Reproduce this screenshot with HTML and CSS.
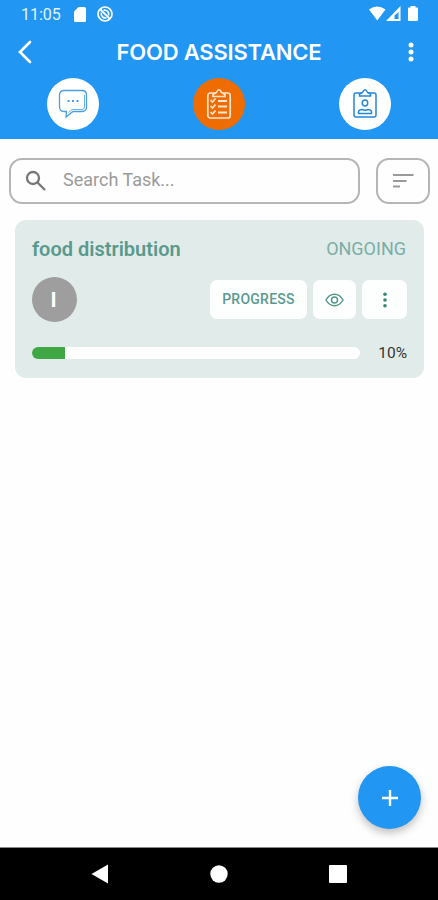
FILE: index.html
```html
<!DOCTYPE html>
<html lang="en">

<head>
    <meta charset="UTF-8">
    <meta name="viewport" content="width=device-width, initial-scale=1.0">
    <title>Food Assistance</title>
    <link rel="stylesheet" href="styles.css">
</head>

<body>

    <header class="header">
        <div class="status-bar">
            <span class="time">11:05</span>
            <svg class="sd" width="12" height="15" viewBox="0 0 12 15">
                <path d="M4.5 0H10.5Q12 0 12 1.5V13.5Q12 15 10.5 15H1.5Q0 15 0 13.5V4.5Z" fill="#fff" />
            </svg>
            <svg class="sync" width="16" height="16" viewBox="0 0 16 16" fill="none" stroke="#fff">
                <circle cx="8" cy="8" r="7" stroke-width="1.700" />
                <path d="M3.500 3.500L12.500 12.500" stroke-width="1.800" />
                <path d="M6.500 4.300A4 4 0 0 1 11.500 9.500M9.500 11.700A4 4 0 0 1 4.500 6.500" stroke-width="1.700" />
            </svg>
            <svg class="signals" width="50" height="16" viewBox="0 0 50 16">
                <path d="M0 3.500Q8 -2.500 16.500 3.500L8.250 14.500Z" fill="#fff" />
                <path d="M31.500 0V15H17Z" fill="#fff" />
                <path d="M29.500 6V13H25.500V9.500Z" fill="#2196f3" />
                <path d="M41.500 0H46.500V1.500H48Q49 1.500 49 2.500V14Q49 15 48 15H40Q39 15 39 14V2.500Q39 1.500 40 1.500H41.500Z" fill="#fff" />
            </svg>
        </div>

        <div class="title-bar">
            <svg class="back" width="16" height="24" viewBox="0 0 16 24">
                <path d="M13 2L3 12L13 22" fill="none" stroke="#fff" stroke-width="2.700" stroke-linecap="round" />
            </svg>
            <h1 class="title">FOOD ASSISTANCE</h1>
            <svg class="more" width="6" height="20" viewBox="0 0 6 20" fill="#fff">
                <circle cx="3" cy="3" r="2.500" />
                <circle cx="3" cy="10" r="2.500" />
                <circle cx="3" cy="17" r="2.500" />
            </svg>
        </div>

        <nav class="tabs">
            <a class="tab">
                <svg width="30" height="30" viewBox="0 0 30 30" fill="none" stroke="#4a9fe3" stroke-width="1.300">
                    <path d="M6 1.500H24Q28.500 1.500 28.500 6V18Q28.500 22.500 24 22.500H15L8 28L8.500 22.500H6Q1.500 22.500 1.500 18V6Q1.500 1.500 6 1.500Z" />
                    <path d="M26.500 6V18Q26.500 20.500 24 20.500H14L10.500 23.500" stroke-width="0.800" />
                    <path d="M9.500 12H11.500M14 12H16M18.500 12H20.500" stroke-width="2" />
                </svg>
            </a>
            <a class="tab active">
                <svg width="26" height="32" viewBox="0 0 26 32" fill="none" stroke="#ffe6cf" stroke-width="1.700">
                    <rect x="1.800" y="5" width="22.400" height="25" rx="2.500" />
                    <path d="M7 8.500V6.500L10.500 4.500Q13 -1 15.500 4.500L19 6.500V8.500Z" fill="#ef6c00" />
                    <path d="M12 13H21M12 18.500H21M12 24.500H21" stroke-width="1.900" />
                    <path d="M4.500 12L6.500 14L9.500 10.500M4.500 18L6.500 20L9.500 16.500M4.500 24L6.500 26L9.500 22.500" />
                </svg>
            </a>
            <a class="tab">
                <svg width="26" height="32" viewBox="0 0 26 32" fill="none" stroke="#2687d8" stroke-width="1.500">
                    <rect x="2" y="5" width="22" height="24" rx="2" />
                    <path d="M7.500 8V6L10.500 4.500Q13 -1 15.500 4.500L18.500 6V8Z" fill="#fff" />
                    <ellipse cx="13" cy="15" rx="2.700" ry="3" />
                    <path d="M6.500 25.500V23.500Q7 21.500 10.500 21.500L13 22.500L15.500 21.500Q19 21.500 19.500 23.500V25.500Z" />
                </svg>
            </a>
        </nav>
    </header>

    <main class="content">
        <div class="search-row">
            <div class="search">
                <svg width="22" height="22" viewBox="0 0 22 22" fill="none" stroke="#777" stroke-width="2.300">
                    <circle cx="8" cy="8" r="6" />
                    <path d="M12.500 12.500L20 20" />
                </svg>
                <span class="placeholder">Search Task...</span>
            </div>
            <div class="sort">
                <svg width="21" height="14" viewBox="0 0 21 14" stroke="#999" stroke-width="2">
                    <path d="M0 1H20.500M0 7H13.500M0 12.500H7" />
                </svg>
            </div>
        </div>

        <section class="card">
            <div class="card-head">
                <h2 class="task-name">food distribution</h2>
                <span class="task-status">ONGOING</span>
            </div>
            <div class="card-actions">
                <div class="avatar">I</div>
                <div class="btn btn-progress">PROGRESS</div>
                <div class="btn btn-view">
                    <svg width="19" height="14" viewBox="0 0 20 14" fill="none" stroke="#52968a" stroke-width="1.500">
                        <path d="M1 7Q4.500 1 10 1T19 7Q15.500 13 10 13T1 7Z" />
                        <circle cx="10" cy="7" r="3.200" />
                    </svg>
                </div>
                <div class="btn btn-menu">
                    <svg width="4" height="16" viewBox="0 0 4 16" fill="#398577">
                        <circle cx="2" cy="2.300" r="1.800" />
                        <circle cx="2" cy="8" r="1.800" />
                        <circle cx="2" cy="13.700" r="1.800" />
                    </svg>
                </div>
            </div>
            <div class="card-progress">
                <div class="bar">
                    <div class="bar-fill" style="width: 10%"></div>
                </div>
                <span class="percent">10%</span>
            </div>
        </section>
    </main>

    <div class="fab">
        <svg width="18" height="18" viewBox="0 0 18 18" stroke="#fff" stroke-width="2.400">
            <path d="M9 1V17M1 9H17" />
        </svg>
    </div>

    <footer class="nav-bar">
        <svg width="18" height="20" viewBox="0 0 18 20" fill="#fff">
            <path d="M0.500 10L17 0.500V19.500Z" />
        </svg>
        <svg width="18" height="18" viewBox="0 0 18 18" fill="#fff">
            <circle cx="9" cy="9" r="8.700" />
        </svg>
        <svg width="18" height="18" viewBox="0 0 18 18" fill="#fff">
            <rect width="18" height="18" rx="1" />
        </svg>
    </footer>

</body>

</html>
```
FILE: styles.css
```css
* {
    box-sizing: border-box;
}

body {
    display: flex;
    flex-direction: column;
    height: 100vh;
    margin: 0;
    overflow: hidden;
    background-color: #fefefe;
    font-family: Roboto, sans-serif;
}

svg {
    display: block;
    flex-shrink: 0;
}

.header {
    height: 139px;
    background-color: #2196f3;
    color: #fff;
}

.status-bar {
    display: flex;
    align-items: center;
    height: 28px;
    padding: 0 19px 0 21px;
}

.time {
    width: 53px;
    padding-top: 2px;
    font-size: 16px;
    line-height: 26px;
    color: #e3f2fd;
}

.sync {
    margin-left: 11px;
}

.signals {
    margin-left: auto;
}

.title-bar {
    display: flex;
    align-items: center;
    justify-content: space-between;
    height: 48px;
    padding: 0 24px 0 17px;
}

.title {
    margin: 0 3px 0 0;
    font-family: Inter, sans-serif;
    font-size: 22px;
    font-weight: 600;
    letter-spacing: -0.2px;
    white-space: nowrap;
}

.tabs {
    display: grid;
    grid-template-columns: repeat(3, 1fr);
    justify-items: center;
    padding-top: 2px;
}

.tab {
    display: flex;
    align-items: center;
    justify-content: center;
    width: 52px;
    height: 52px;
    border-radius: 50%;
    background-color: #fff;
}

.tab.active {
    background-color: #ef6c00;
}

.content {
    flex: 1;
    padding: 19px 8px 0 9px;
}

.search-row {
    display: flex;
    gap: 16px;
    height: 46px;
}

.search,
.sort {
    display: flex;
    align-items: center;
    border: 2px solid #b5b5b5;
    border-radius: 13px;
}

.search {
    flex: 1;
    gap: 16px;
    padding-left: 14px;
}

.placeholder {
    padding-bottom: 3px;
    font-size: 18px;
    color: #9b9b9b;
}

.sort {
    justify-content: center;
    width: 54px;
}

.card {
    height: 158px;
    margin: 16px 6px 0;
    padding: 17px 17px 0;
    border-radius: 11px;
    background-color: #e1ecea;
}

.card-head {
    display: flex;
    justify-content: space-between;
    align-items: center;
    height: 24px;
}

.task-name {
    margin: 0;
    font-size: 20px;
    font-weight: 600;
    color: #5a998e;
}

.task-status {
    padding: 0 1px 2px 0;
    font-size: 18px;
    color: #7aaea5;
}

.card-actions {
    display: flex;
    align-items: center;
    gap: 6px;
    height: 45px;
    margin-top: 16px;
}

.avatar {
    display: flex;
    align-items: center;
    justify-content: center;
    width: 45px;
    height: 45px;
    margin-right: auto;
    padding-right: 2px;
    border-radius: 50%;
    background-color: #9e9e9e;
    color: #fff;
    font-family: Inter, sans-serif;
    font-size: 20px;
    font-weight: 700;
}

.btn {
    display: flex;
    align-items: center;
    justify-content: center;
    height: 39px;
    border-radius: 7px;
    background-color: #fdfefe;
    color: #5a998e;
}

.btn-progress {
    width: 97px;
    padding-bottom: 1px;
    font-size: 14px;
    font-weight: 500;
    letter-spacing: 0.25px;
}

.btn-view {
    width: 43px;
}

.btn-menu {
    width: 45px;
}

.card-progress {
    display: flex;
    align-items: center;
    justify-content: space-between;
    height: 20px;
    margin-top: 21px;
}

.bar {
    width: 328px;
    height: 12px;
    border-radius: 6px;
    overflow: hidden;
    background-color: #fff;
}

.bar-fill {
    height: 100%;
    background-color: #3fa845;
}

.percent {
    font-size: 15.5px;
    color: #333;
}

.fab {
    position: absolute;
    right: 17px;
    bottom: 71px;
    display: flex;
    align-items: center;
    justify-content: center;
    width: 63px;
    height: 63px;
    border-radius: 50%;
    background-color: #2196f3;
    box-shadow: 0 4px 8px rgba(0, 0, 0, 0.25);
}

.nav-bar {
    display: flex;
    align-items: center;
    justify-content: space-between;
    height: 53px;
    padding: 0 91px;
    border-top: 1px solid #888;
    background-color: #000;
}
```
